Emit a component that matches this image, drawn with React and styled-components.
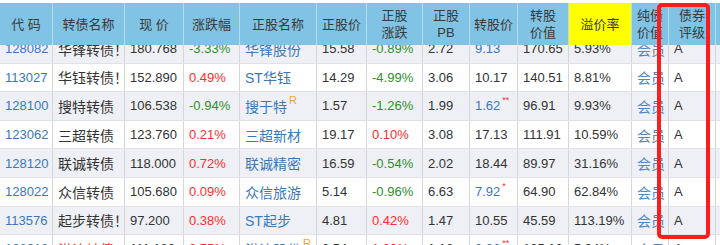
import React from 'react';
import styled, { createGlobalStyle } from 'styled-components';

const GlobalStyle = createGlobalStyle`
  html, body {
    margin: 0;
    padding: 0;
    background: #fff;
    overflow: hidden;
  }
`;

const columns = '53px 72px 59px 56px 77px 50px 56px 47px 48px 51px 63px 37px 47px 60px';

const BLUE = '#3a78bb';
const RED = '#ff2d2d';
const GREEN = '#2f8f2a';
const DARK = '#333';

const headers = [
    ['代 码'],
    ['转债名称'],
    ['现 价'],
    ['涨跌幅'],
    ['正股名称'],
    ['正股价'],
    ['正股', '涨跌'],
    ['正股', 'PB'],
    ['转股价'],
    ['转股', '价值'],
    ['溢价率'],
    ['纯债', '价值'],
    ['债券', '评级'],
    ['到期', '时间'],
];

const bonds = [
    { code: '128082', name: '华锋转债！', price: '180.768', chg: '-3.33%', stock: '华锋股份', sp: '15.58', schg: '-0.89%', pb: '2.72', conv: '9.13', star: '**', value: '170.65', prem: '5.93%' },
    { code: '113027', name: '华钰转债！', price: '152.890', chg: '0.49%', stock: 'ST华钰', sp: '14.29', schg: '-4.99%', pb: '3.06', conv: '10.17', value: '140.51', prem: '8.81%' },
    { code: '128100', name: '搜特转债', price: '106.538', chg: '-0.94%', stock: '搜于特', r: true, sp: '1.57', schg: '-1.26%', pb: '1.99', conv: '1.62', star: '**', value: '96.91', prem: '9.93%' },
    { code: '123062', name: '三超转债', price: '123.760', chg: '0.21%', stock: '三超新材', sp: '19.17', schg: '0.10%', pb: '3.08', conv: '17.13', value: '111.91', prem: '10.59%' },
    { code: '128120', name: '联诚转债', price: '118.000', chg: '0.72%', stock: '联诚精密', sp: '16.59', schg: '-0.54%', pb: '2.02', conv: '18.44', value: '89.97', prem: '31.16%' },
    { code: '128022', name: '众信转债', price: '105.680', chg: '0.09%', stock: '众信旅游', sp: '5.14', schg: '-0.96%', pb: '6.63', conv: '7.92', star: '*', value: '64.90', prem: '62.84%' },
    { code: '113576', name: '起步转债！', price: '97.200', chg: '0.38%', stock: 'ST起步', sp: '4.81', schg: '0.42%', pb: '1.47', conv: '10.55', value: '45.59', prem: '113.19%' },
    { code: '128013', name: '洪涛转债', hot: true, price: '111.180', chg: '0.75%', stock: '洪涛股份', r: true, sp: '2.54', schg: '1.20%', pb: '1.16', conv: '3.36', star: '**', value: '105.12', prem: '5.94%' },
];

const signColor = (v) => (v.startsWith('-') ? GREEN : RED);

function App() {
    return (
        <Page>
            <GlobalStyle />
            <TableWrap>
                <HeaderRow>
                    {headers.map((lines, i) => (
                        <HeadCell key={i} $yellow={lines[0] === '溢价率'}>
                            {lines.map((l) => (
                                <span key={l}>{l}</span>
                            ))}
                        </HeadCell>
                    ))}
                </HeaderRow>
                <Body>
                    <BodyInner>
                        {bonds.map((b, index) => (
                            <Row key={b.code} $alt={index % 2 === 0}>
                                <Cell $color={BLUE}>{b.code}</Cell>
                                <Cell $color={b.hot ? RED : DARK} $cjk>{b.name}</Cell>
                                <Cell>{b.price}</Cell>
                                <Cell $color={signColor(b.chg)}>{b.chg}</Cell>
                                <Cell $color={BLUE} $cjk>
                                    {b.stock}
                                    {b.r && <Sup $color="#f5a431" $size="11px">R</Sup>}
                                </Cell>
                                <Cell>{b.sp}</Cell>
                                <Cell $color={signColor(b.schg)}>{b.schg}</Cell>
                                <Cell>{b.pb}</Cell>
                                <Cell $color={b.star ? BLUE : DARK}>
                                    {b.conv}
                                    {b.star && <Sup $color={RED} $size="9px">{b.star}</Sup>}
                                </Cell>
                                <Cell>{b.value}</Cell>
                                <Cell>{b.prem}</Cell>
                                <Cell $color="#4a88c7" $cjk>会员</Cell>
                                <Cell>A</Cell>
                                <Cell $color={BLUE} $cjk>加自选</Cell>
                            </Row>
                        ))}
                    </BodyInner>
                </Body>
                <Highlight />
            </TableWrap>
        </Page>
    );
}

const Page = styled.div`
width: 720px;
height: 245px;
overflow: hidden;
background: #fff;
padding-top: 3px;
box-sizing: border-box;
font-family: "Liberation Sans", Arial, "Noto Sans CJK SC", sans-serif;
`;

const TableWrap = styled.div`
position: relative;
width: 776px;
`;

const HeaderRow = styled.div`
display: grid;
grid-template-columns: ${columns};
height: 42px;
background-color: #80c3e4;
`;

const HeadCell = styled.div`
display: flex;
flex-direction: column;
align-items: center;
justify-content: center;
border-right: 1px solid #b7dbee;
background-color: ${(p) => (p.$yellow ? '#ffff00' : 'transparent')};
color: #3a3a3a;
font-size: 13px;
line-height: 17px;
`;

const Body = styled.div`
height: 200px;
overflow: hidden;
`;

const BodyInner = styled.div`
margin-top: -10px;
`;

const Row = styled.div`
display: grid;
grid-template-columns: ${columns};
height: 28.6px;
box-sizing: border-box;
border-bottom: 1px solid #e1e1e6;
background-color: ${(p) => (p.$alt ? '#eff0f5' : '#fff')};
`;

const Cell = styled.div`
display: flex;
align-items: center;
padding-left: 5px;
border-right: 1px solid #d6d6d6;
white-space: nowrap;
overflow: hidden;
color: ${(p) => p.$color || DARK};
font-size: ${(p) => (p.$cjk ? '14px' : '13px')};
`;

const Sup = styled.span`
align-self: flex-start;
margin-top: 3px;
margin-left: 2px;
font-size: ${(p) => p.$size};
line-height: 11px;
color: ${(p) => p.$color};
`;

const Highlight = styled.div`
position: absolute;
left: 657px;
top: 0;
width: 53px;
height: 236px;
box-sizing: border-box;
border: 4px solid #ff1c1c;
border-radius: 5px;
pointer-events: none;
`;

export default App;
